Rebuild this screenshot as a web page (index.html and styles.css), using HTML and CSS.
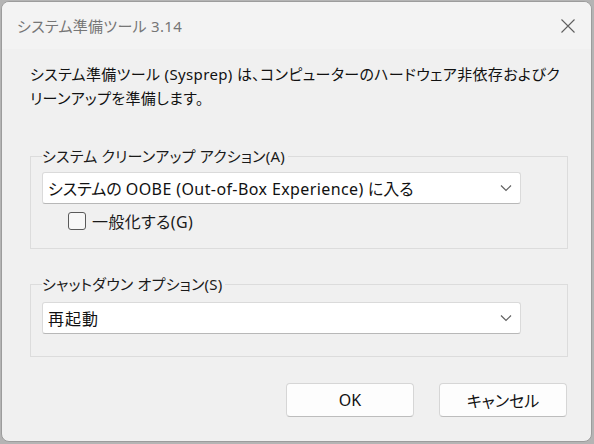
FILE: index.html
```html
<!DOCTYPE html>
<html lang="ja">
<head>
<meta charset="utf-8">
<title>システム準備ツール 3.14</title>
<link rel="stylesheet" href="styles.css">
</head>
<body>
<div class="window">
  <div class="titlebar">
    <span class="title">システム準備ツール 3.14</span>
    <svg class="close" width="16" height="16" viewBox="0 0 16 16"><path d="M1.5 1.5 L14.5 14.5 M14.5 1.5 L1.5 14.5" stroke="#5f5f5f" stroke-width="1.1" fill="none"/></svg>
  </div>
  <div class="content">
    <p class="desc">システム準備ツール (Sysprep) は、コンピューターのハードウェア非依存およびク<br>リーンアップを準備します。</p>
    <fieldset class="group first">
      <legend>システム クリーンアップ アクション(A)</legend>
      <div class="combo">
        <span>システムの <span class="latin">OOBE (Out-of-Box Experience)</span> に入る</span>
        <svg class="chev" width="12" height="8" viewBox="0 0 12 8"><path d="M1 1.5 L6 6.5 L11 1.5" stroke="#606060" stroke-width="1.2" fill="none"/></svg>
      </div>
      <label class="check"><span class="box"></span><span>一般化する(G)</span></label>
    </fieldset>
    <fieldset class="group second">
      <legend>シャットダウン オプション(S)</legend>
      <div class="combo">
        <span class="wide">再起動</span>
        <svg class="chev" width="12" height="8" viewBox="0 0 12 8"><path d="M1 1.5 L6 6.5 L11 1.5" stroke="#606060" stroke-width="1.2" fill="none"/></svg>
      </div>
    </fieldset>
    <div class="buttons">
      <button class="btn">OK</button>
      <button class="btn">キャンセル</button>
    </div>
  </div>
</div>
</body>
</html>
```
FILE: styles.css
```css
* { box-sizing: border-box; }
html, body { margin: 0; padding: 0; }
body {
  width: 594px;
  height: 444px;
  background: #b4b4b4;
  overflow: hidden;
  font-family: "Noto Sans", "Noto Sans CJK JP", sans-serif;
  font-feature-settings: "palt";
  color: #1a1a1a;
}
.window {
  margin: 1px 0 0 1px;
  width: 591px;
  height: 441px;
  border: 1px solid #9c9c9c;
  border-radius: 8px;
  background: #f0f0f0;
  overflow: hidden;
  display: flex;
  flex-direction: column;
}
.titlebar {
  height: 47px;
  flex: none;
  background: #f3f3f3;
  display: flex;
  align-items: center;
  justify-content: space-between;
  padding: 0 15px 0 15px;
}
.title {
  font-size: 15px;
  letter-spacing: 0.3px;
  color: #767676;
}
.close { display: block; }
.content {
  padding: 13px 0 0 28px;
  display: flex;
  flex-direction: column;
}
.desc {
  margin: 0;
  width: 550px;
  font-size: 15px;
  letter-spacing: 0.35px;
  line-height: 24px;
  color: #111;
  white-space: nowrap;
}
.group {
  margin: 36px 0 0 0;
  width: 538px;
  border: 1px solid #dcdcdc;
  padding: 0 0 18px 11px;
  min-width: 0;
}
.group.second { margin-top: 25px; padding-bottom: 22px; }
.group legend {
  font-size: 15px;
  letter-spacing: 0.2px;
  line-height: 20px;
  padding: 0 3px 0 0;
  margin-left: 0;
  color: #1a1a1a;
}
.combo {
  margin-top: 6px;
  width: 479px;
  height: 32px;
  background: #fff;
  border: 1px solid #dadada;
  border-bottom-color: #b8b8b8;
  border-radius: 3px;
  display: flex;
  align-items: center;
  justify-content: space-between;
  padding: 0 8px 0 5px;
  font-size: 16px;
  color: #111;
}
.latin { letter-spacing: 0.4px; }
.wide { letter-spacing: 1px; }
.group.second .combo { margin-top: 8px; }
.chev { display: block; }
.check {
  margin: 8px 0 0 26px;
  display: flex;
  align-items: center;
  gap: 6px;
  font-size: 16px;
  letter-spacing: 0.4px;
  height: 18px;
}
.box {
  width: 18px;
  height: 18px;
  border: 1px solid #5a5a5a;
  border-radius: 3px;
  background: #f7f7f7;
}
.buttons {
  margin-top: 26px;
  width: 538px;
  display: flex;
  justify-content: flex-end;
  gap: 25px;
}
.btn {
  width: 128px;
  height: 34px;
  background: #fdfdfd;
  border: 1px solid #d6d6d6;
  border-bottom-color: #bdbdbd;
  border-radius: 4px;
  font-family: "Noto Sans", "Noto Sans CJK JP", sans-serif;
  font-feature-settings: "palt";
  font-size: 16px;
  color: #111;
  padding: 0;
}
.btn:last-child { margin-right: 1px; }
```
